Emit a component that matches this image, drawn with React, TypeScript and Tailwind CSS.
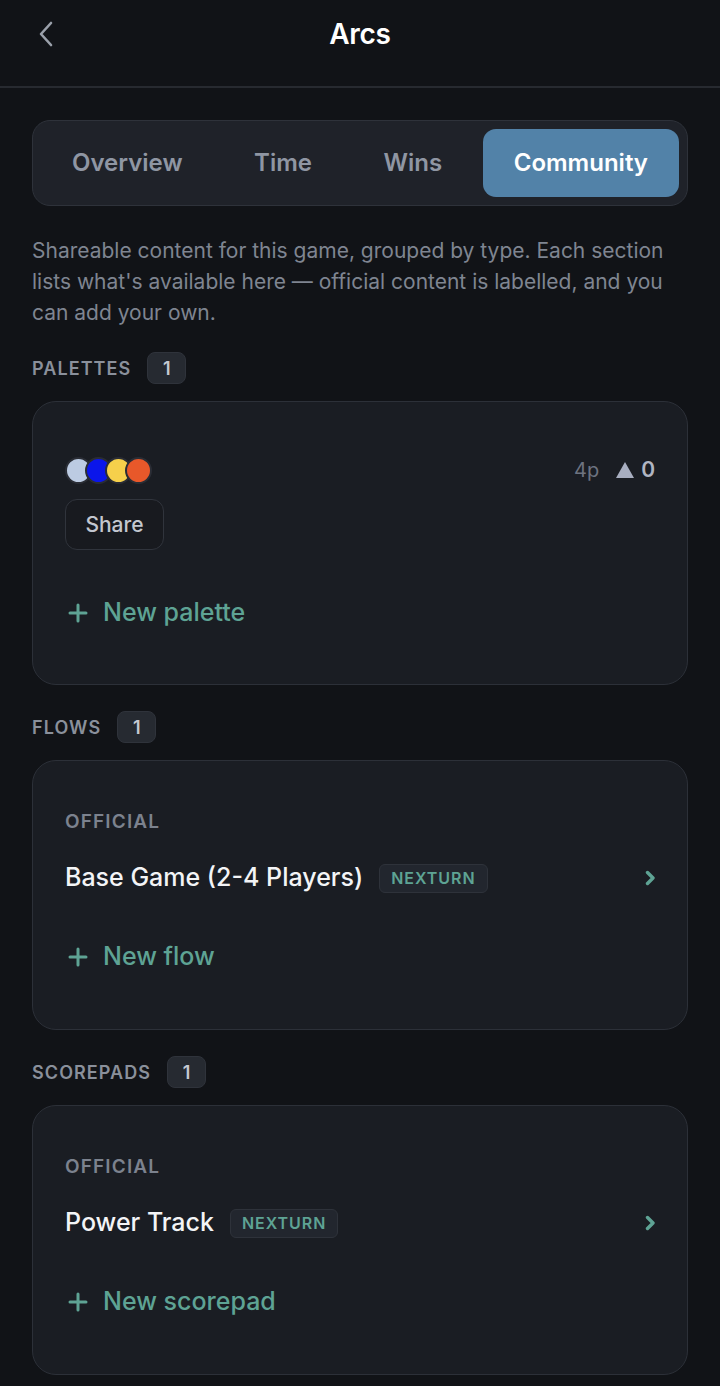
import React from "react";

const TEAL = "text-[#5ea394]";

function Plus() {
  return (
    <svg width="22" height="22" viewBox="0 0 22 22" fill="none" stroke="currentColor" strokeWidth="3" strokeLinecap="round">
      <path d="M11 3v16M3 11h16" />
    </svg>
  );
}

function Chevron() {
  return (
    <svg width="12" height="18" viewBox="0 0 12 18" fill="none" stroke="currentColor" strokeWidth="3.4" strokeLinecap="round" strokeLinejoin="round">
      <path d="M4.5 3.5l5.5 5.5-5.5 5.5" />
    </svg>
  );
}

function SectionLabel({ title, count }: { title: string; count: number }) {
  return (
    <div className="flex items-center gap-[16px] mb-[17px]">
      <span className="text-[18px] font-semibold tracking-[0.06em] text-[#8a909b]">{title}</span>
      <span className="h-[32px] min-w-[39px] px-[12px] flex items-center justify-center rounded-[8px] bg-[#262a31] border border-[#2f333b] text-[18px] font-semibold text-[#c5c9d1]">
        {count}
      </span>
    </div>
  );
}

function NewLink({ label }: { label: string }) {
  return (
    <div className={`flex items-center gap-[14px] h-[32px] pl-[2px] ${TEAL}`}>
      <Plus />
      <span className="text-[25px] font-medium">{label}</span>
    </div>
  );
}

function OfficialCard({ name, addLabel }: { name: string; addLabel: string }) {
  return (
    <div className="rounded-[24px] border border-[#2c3038] bg-[#1a1d23] px-[32px] pt-[49px] pb-[56px]">
      <div className="h-[24px] flex items-center text-[19px] font-semibold tracking-[0.06em] text-[#7c828e]">OFFICIAL</div>
      <div className="mt-[28px] h-[32px] flex items-center">
        <span className="text-[25px] font-medium text-[#f3f4f6]">{name}</span>
        <span className="ml-[16px] h-[29px] px-[11px] flex items-center rounded-[6px] bg-[#22262e] border border-[#2e323a] text-[16px] font-semibold tracking-[0.06em] text-[#5ea394]">
          NEXTURN
        </span>
        <span className={`ml-auto ${TEAL}`}>
          <Chevron />
        </span>
      </div>
      <div className="mt-[47px]">
        <NewLink label={addLabel} />
      </div>
    </div>
  );
}

const swatches = ["#bccbe2", "#0b16ea", "#f6d04b", "#e8582a"];

export default function App() {
  return (
    <div
      className="min-h-[1386px] bg-[#111317] text-white"
      style={{ fontFamily: "Inter, 'Noto Sans', sans-serif" }}
    >
      {/* top bar */}
      <header className="h-[88px] border-b-2 border-[#272a30]">
        <div className="relative h-[68px] flex items-center justify-center">
          <button className="absolute left-[34px] top-[20px] text-[#9aa0aa]">
            <svg width="26" height="28" viewBox="0 0 26 28" fill="none" stroke="currentColor" strokeWidth="2.6" strokeLinecap="round" strokeLinejoin="round">
              <path d="M17 3L7 14l10 11" />
            </svg>
          </button>
          <h1 className="text-[28px] font-semibold tracking-[-0.01em]">Arcs</h1>
        </div>
      </header>

      <main className="px-[32px] pt-[32px] pb-[20px]">
        {/* tabs */}
        <div className="h-[86px] rounded-[18px] border border-[#2e323a] bg-[#1f2229] p-[8px] flex items-center justify-between">
          {["Overview", "Time", "Wins"].map((t) => (
            <div key={t} className="h-[68px] px-[31px] flex items-center text-[24px] font-semibold text-[#8f96a3]">
              {t}
            </div>
          ))}
          <div className="h-[68px] px-[31px] flex items-center rounded-[13px] bg-[#5282a8] text-[24px] font-semibold text-white">
            Community
          </div>
        </div>

        <p className="mt-[29px] text-[21px] leading-[31px] text-[#7f8591]">
          Shareable content for this game, grouped by type. Each section lists what's available here — official content is labelled, and you can add your own.
        </p>

        {/* palettes */}
        <section className="mt-[24px]">
          <SectionLabel title="PALETTES" count={1} />
          <div className="rounded-[24px] border border-[#2c3038] bg-[#1a1d23] px-[32px] pt-[54px] pb-[55px]">
            <div className="h-[28px] flex items-center">
              <div className="flex">
                {swatches.map((c, i) => (
                  <span
                    key={c}
                    className={`w-[27px] h-[27px] rounded-full border-2 border-[#2a2d35] ${i > 0 ? "-ml-[7px]" : ""}`}
                    style={{ backgroundColor: c }}
                  />
                ))}
              </div>
              <div className="ml-auto flex items-center text-[20px]">
                <span className="text-[#6d7380]">4p</span>
                <svg className="ml-[16px]" width="20" height="18" viewBox="0 0 20 18">
                  <path d="M10 1L19 17H1z" fill="#a8aec0" />
                </svg>
                <span className="ml-[6px] text-[21px] font-semibold text-[#b0b5c2]">0</span>
              </div>
            </div>
            <button className="mt-[15px] h-[51px] w-[99px] rounded-[12px] border border-[#30343c] bg-[#181a1f] text-[21px] font-medium text-[#c3c7cf]">
              Share
            </button>
            <div className="mt-[47px]">
              <NewLink label="New palette" />
            </div>
          </div>
        </section>

        {/* flows */}
        <section className="mt-[26px]">
          <SectionLabel title="FLOWS" count={1} />
          <OfficialCard name="Base Game (2-4 Players)" addLabel="New flow" />
        </section>

        {/* scorepads */}
        <section className="mt-[26px]">
          <SectionLabel title="SCOREPADS" count={1} />
          <OfficialCard name="Power Track" addLabel="New scorepad" />
        </section>
      </main>
    </div>
  );
}
